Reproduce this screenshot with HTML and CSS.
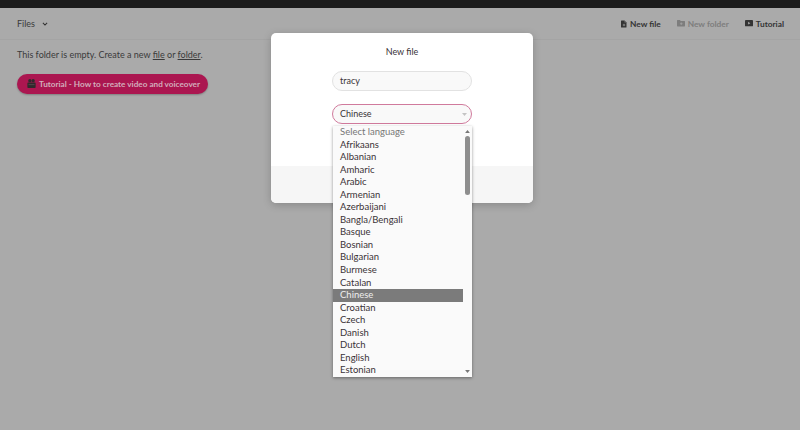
FILE: index.html
```html
<!DOCTYPE html>
<html lang="en">
<head>
  <meta charset="UTF-8">
  <meta name="viewport" content="width=device-width, initial-scale=1.0">
  <title>Files</title>
  <link rel="stylesheet" href="styles.css">
</head>
<body>
  <div class="top-strip"></div>
  <div class="page">
    <header class="toolbar">
      <div class="crumb">Files
        <svg class="chevron" viewBox="0 0 10 10" width="6" height="6"><path d="M1.5 3.2 5 6.8l3.500-3.600" fill="none" stroke="#333" stroke-width="1.800"/></svg>
      </div>
      <nav class="actions">
        <a class="action">
          <svg viewBox="0 0 12 14" width="6" height="8"><path d="M1 0h6l4 4v9a1 1 0 0 1-1 1H1a1 1 0 0 1-1-1V1a1 1 0 0 1 1-1z" fill="#333"/><path d="M7 0v4h4z" fill="#777"/><path d="M6 6.500v5M3.500 9h5" stroke="#aaa" stroke-width="1.300"/></svg>
          New file
        </a>
        <a class="action action-off">
          <svg viewBox="0 0 15 12" width="8" height="6.400"><path d="M1 0h4.500l1.500 2h7a1 1 0 0 1 1 1v8a1 1 0 0 1-1 1H1a1 1 0 0 1-1-1V1a1 1 0 0 1 1-1z" fill="#7d7d7d"/><path d="M8 4.500v5M5.500 7h5" stroke="#aaa" stroke-width="1.200"/></svg>
          New folder
        </a>
        <a class="action">
          <svg viewBox="0 0 14 11" width="8" height="6.300"><rect width="14" height="11" rx="1.500" fill="#333"/><path d="M5.500 3v5l3.800-2.500z" fill="#aaa"/></svg>
          Tutorial
        </a>
      </nav>
    </header>
    <main class="content">
      <p class="empty">This folder is empty. Create a new <u>file</u> or <u>folder</u>.</p>
      <a class="tutorial-btn">
        <svg viewBox="0 0 12 12" width="9" height="9"><path d="M1.500 4.500h9a1 1 0 0 1 1 1V11a1 1 0 0 1-1 1h-9a1 1 0 0 1-1-1V5.500a1 1 0 0 1 1-1z" fill="#2f2a2c"/><circle cx="3.800" cy="2.200" r="2.200" fill="#2f2a2c"/><circle cx="8.200" cy="2.200" r="2.200" fill="#2f2a2c"/><path d="M2 7.500h8" stroke="#6d5560" stroke-width="0.800"/></svg>
        Tutorial - How to create video and voiceover
      </a>
    </main>
  </div>

  <div class="overlay">
    <div class="modal">
      <div class="modal-body">
        <h2 class="modal-title">New file</h2>
        <div class="field">tracy</div>
        <div class="field field-active">Chinese
          <svg class="select-arrow" viewBox="0 0 10 6" width="5" height="3"><path d="M0 0h10L5 6z" fill="#c4c4c4"/></svg>
        </div>
      </div>
      <div class="modal-footer"></div>
    </div>

    <div class="dropdown">
      <ul class="options">
        <li class="placeholder">Select language</li>
        <li>Afrikaans</li>
        <li>Albanian</li>
        <li>Amharic</li>
        <li>Arabic</li>
        <li>Armenian</li>
        <li>Azerbaijani</li>
        <li>Bangla/Bengali</li>
        <li>Basque</li>
        <li>Bosnian</li>
        <li>Bulgarian</li>
        <li>Burmese</li>
        <li>Catalan</li>
        <li class="selected">Chinese</li>
        <li>Croatian</li>
        <li>Czech</li>
        <li>Danish</li>
        <li>Dutch</li>
        <li>English</li>
        <li>Estonian</li>
      </ul>
      <div class="scrollbar">
        <svg viewBox="0 0 8 5" width="5" height="3"><path d="M4 0l4 5H0z" fill="#777"/></svg>
        <div class="scroll-thumb"></div>
        <svg class="scroll-down" viewBox="0 0 8 5" width="5" height="3"><path d="M4 5l4-5H0z" fill="#777"/></svg>
      </div>
    </div>
  </div>
</body>
</html>
```
FILE: styles.css
```css
* {
  box-sizing: border-box;
}

body {
  margin: 0;
  height: 430px;
  overflow: hidden;
  font-family: "Lato", "Open Sans", sans-serif;
  background-color: #aaaaaa;
  color: #2f2a2c;
}

.top-strip {
  height: 8px;
  background-color: #1b1b1b;
}

.toolbar {
  display: flex;
  align-items: center;
  justify-content: space-between;
  height: 32px;
  padding: 0 16px 0 17px;
  border-bottom: 1px solid #a4a4a4;
}

.crumb {
  display: flex;
  align-items: center;
  gap: 7px;
  font-size: 9px;
  color: #3a3a3a;
}

.actions {
  display: flex;
  gap: 16px;
}

.action {
  display: flex;
  align-items: center;
  gap: 3px;
  font-size: 8.3px;
  font-weight: 700;
  color: #333;
}

.action-off {
  color: #7d7d7d;
}

.content {
  padding: 9px 17px;
}

.empty {
  margin: 0 0 11px;
  font-size: 9px;
  line-height: 12px;
  color: #3a3a3a;
}

.tutorial-btn {
  display: inline-flex;
  align-items: center;
  gap: 3px;
  height: 20px;
  padding: 0 8px 0 10px;
  border-radius: 10px;
  font-size: 8.2px;
  font-weight: 700;
  color: #d2aebc;
  background-color: #ab1650;
  box-shadow: 0 1px 2px rgba(0, 0, 0, 0.25);
}

.overlay {
  position: absolute;
  inset: 0;
}

.modal {
  position: absolute;
  top: 33px;
  left: 271px;
  width: 262px;
  height: 170px;
  display: flex;
  flex-direction: column;
  background-color: #fff;
  border-radius: 5px;
  overflow: hidden;
  box-shadow: 0 2px 8px rgba(0, 0, 0, 0.2);
}

.modal-body {
  flex: 1;
  display: flex;
  flex-direction: column;
  align-items: center;
  padding-top: 13px;
}

.modal-title {
  margin: 0 0 13px;
  font-size: 9px;
  line-height: 12px;
  font-weight: 400;
  color: #3a3337;
}

.field {
  position: relative;
  width: 140px;
  height: 20px;
  margin-bottom: 13px;
  padding-left: 7px;
  font-size: 9px;
  line-height: 18px;
  color: #3a3337;
  background-color: #f9f9f9;
  border: 1px solid #e2e2e2;
  border-radius: 10px;
}

.field-active {
  border-color: #d07a9c;
}

.select-arrow {
  position: absolute;
  top: 8px;
  right: 4px;
}

.modal-footer {
  height: 37px;
  background-color: #f6f6f6;
}

.dropdown {
  position: absolute;
  top: 126px;
  left: 333px;
  width: 139px;
  height: 251px;
  display: flex;
  background-color: #fafafa;
  box-shadow: 0 1px 3px rgba(0, 0, 0, 0.4);
  overflow: hidden;
}

.options {
  flex: 1;
  margin: 0;
  padding: 0;
  list-style: none;
  font-size: 9.5px;
  color: #3a3337;
}

.options li {
  height: 12.55px;
  line-height: 12.5px;
  padding-left: 7px;
}

.options .placeholder {
  color: #777;
}

.options .selected {
  color: #eee;
  background-color: #7b7b7b;
}

.scrollbar {
  width: 9px;
  display: flex;
  flex-direction: column;
  align-items: center;
  padding-top: 4px;
}

.scroll-thumb {
  width: 4.500px;
  height: 59px;
  margin-top: 3px;
  border-radius: 3px;
  background-color: #8e8e8e;
}

.scroll-down {
  margin-top: auto;
  margin-bottom: 4px;
}
```
